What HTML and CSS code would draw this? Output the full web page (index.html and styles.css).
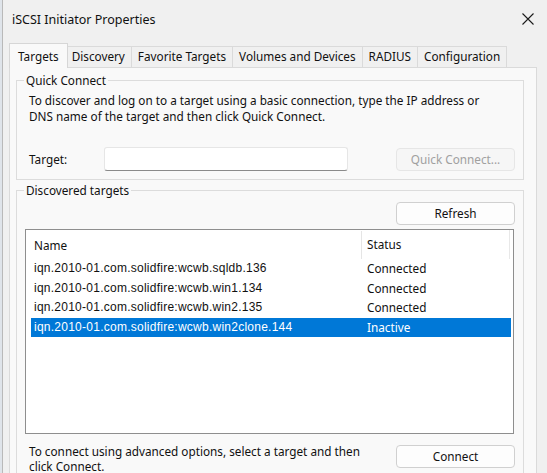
FILE: index.html
```html
<!DOCTYPE html>
<html>
<head>
<meta charset="utf-8">
<title>iSCSI Initiator Properties</title>
<link rel="stylesheet" href="styles.css">
</head>
<body>
<div class="window">
  <div class="titlebar">
    <span class="title">iSCSI Initiator Properties</span>
    <svg class="close" width="12" height="12" viewBox="0 0 12 12"><path d="M0.5 0.5 L11.5 11.5 M11.5 0.5 L0.5 11.5" stroke="#1b1b1b" stroke-width="1.1" fill="none"/></svg>
  </div>
  <div class="tabs">
    <div class="tab selected">Targets</div>
    <div class="tab">Discovery</div>
    <div class="tab">Favorite Targets</div>
    <div class="tab">Volumes and Devices</div>
    <div class="tab">RADIUS</div>
    <div class="tab">Configuration</div>
  </div>
  <div class="panel">
    <fieldset class="group qc">
      <legend>Quick Connect</legend>
      <div class="qc-body">
        <p class="desc">To discover and log on to a target using a basic connection, type the IP address or<br>DNS name of the target and then click Quick Connect.</p>
        <div class="target-row">
          <span class="label">Target:</span>
          <div class="input"></div>
          <div class="btn disabled">Quick Connect...</div>
        </div>
      </div>
    </fieldset>
    <fieldset class="group disc">
      <legend>Discovered targets</legend>
      <div class="disc-body">
        <div class="btn-row"><div class="btn">Refresh</div></div>
        <div class="list">
          <div class="list-head">
            <div class="col-name">Name</div>
            <div class="col-status">Status</div>
          </div>
          <div class="row"><div class="cell-name">iqn.2010-01.com.solidfire:wcwb.sqldb.136</div><div class="cell-status">Connected</div></div>
          <div class="row"><div class="cell-name">iqn.2010-01.com.solidfire:wcwb.win1.134</div><div class="cell-status">Connected</div></div>
          <div class="row"><div class="cell-name">iqn.2010-01.com.solidfire:wcwb.win2.135</div><div class="cell-status">Connected</div></div>
          <div class="row sel"><div class="cell-name">iqn.2010-01.com.solidfire:wcwb.win2clone.144</div><div class="cell-status">Inactive</div></div>
        </div>
        <div class="bottom-row">
          <p class="hint">To connect using advanced options, select a target and then<br>click Connect.</p>
          <div class="btn">Connect</div>
        </div>
      </div>
    </fieldset>
  </div>
</div>
</body>
</html>
```
FILE: styles.css
```css
html, body {
  margin: 0;
  padding: 0;
}
body {
  width: 547px;
  height: 473px;
  overflow: hidden;
  display: flex;
  background: #dfe4ea;
  font-family: "Noto Sans", "DejaVu Sans", sans-serif;
  font-size: 11.75px;
  color: #111;
}
.window {
  margin-left: 2px;
  flex: 1;
  border-left: 1px solid #b9b9b9;
  background: #f0f0f0;
  display: flex;
  flex-direction: column;
}
.titlebar {
  height: 38px;
  flex: none;
  display: flex;
  align-items: center;
  justify-content: space-between;
  padding: 0 13px 0 9px;
}
.title {
  font-size: 12.5px;
  color: #111;
}
.close {
  display: block;
}
.tabs {
  display: flex;
  align-items: flex-end;
  margin-left: 8px;
  padding-top: 6px;
  height: 23px;
  flex: none;
  position: relative;
  z-index: 1;
}
.tab {
  height: 20px;
  line-height: 19px;
  padding: 0 6px;
  border: 1px solid #dadada;
  border-bottom: none;
  background: #f0f0f0;
  margin-right: -1px;
  white-space: nowrap;
}
.tab.selected {
  height: 24px;
  line-height: 25px;
  margin: 0 -2px -1px -2px;
  padding: 0 8px;
  background: #f9f9f9;
  position: relative;
  z-index: 2;
  border-color: #d6d6d6;
}
.tab.selected + .tab {
  border-left: none;
}
.panel {
  margin-left: 6px;
  width: 526px;
  flex: 1;
  background: #f9f9f9;
  border: 1px solid #dadada;
  display: flex;
  flex-direction: column;
}
.group {
  margin: 0 12px 0 6px;
  padding: 0;
  border: 1px solid #dcdcdc;
  border-radius: 0;
  min-width: 0;
}
.group legend {
  margin-left: 7px;
  padding: 0 2px;
  line-height: 16px;
}
.qc {
  margin-top: 4px;
}
.qc-body {
  padding: 4px 8px 8px 12px;
}
.desc {
  margin: 0;
  line-height: 16px;
}
.target-row {
  margin-top: 23px;
  display: flex;
  align-items: center;
  height: 24px;
}
.label {
  width: 75px;
}
.input {
  width: 242px;
  height: 22px;
  background: #ffffff;
  border: 1px solid #e6e6e6;
  border-bottom-color: #8a8a8a;
  border-radius: 3px;
}
.btn {
  width: 117px;
  height: 21px;
  line-height: 21px;
  text-align: center;
  background: #fdfdfd;
  border: 1px solid #d0d0d0;
  border-radius: 4px;
  color: #111;
}
.target-row .btn {
  margin-left: auto;
}
.btn.disabled {
  background: #f6f6f6;
  border-color: #e6e6e6;
  color: #a0a0a0;
}
.disc {
  margin-top: 2px;
  flex: 1;
}
.disc-body {
  padding: 4px 8px 0 8px;
}
.btn-row {
  display: flex;
  justify-content: flex-end;
}
.list {
  margin-top: 4px;
  margin-right: 1px;
  height: 203px;
  background: #ffffff;
  border: 1px solid #8e8e8e;
}
.list-head {
  display: flex;
  height: 29px;
  line-height: 29px;
}
.col-name {
  width: 327px;
  padding-left: 8px;
  border-right: 1px solid #e5e5e5;
  margin-top: 1px;
}
.col-status {
  width: 142px;
  padding-left: 5px;
  border-right: 1px solid #e8e8e8;
}
.row {
  display: flex;
  height: 19.5px;
  line-height: 19.5px;
  margin: 0 2px 0 5px;
}
.cell-name {
  width: 328px;
  padding-left: 3px;
  font-family: "Liberation Sans", Arial, sans-serif;
  font-size: 12px;
  letter-spacing: 0.25px;
  white-space: nowrap;
}
.cell-status {
  padding-left: 5px;
}
.row.sel {
  background: #0078d7;
  color: #ffffff;
}
.bottom-row {
  display: flex;
  justify-content: space-between;
  align-items: flex-start;
  margin-top: 10px;
}
.bottom-row .btn {
  margin-top: 1px;
}
.hint {
  margin: 0 0 0 4px;
  line-height: 15px;
}
```
